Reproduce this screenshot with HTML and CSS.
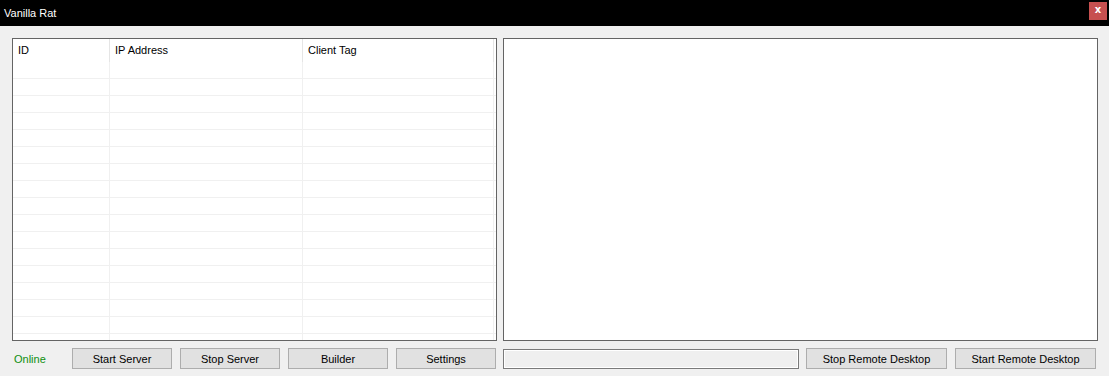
FILE: index.html
```html
<!DOCTYPE html>
<html lang="en">
  <head>
    <meta charset="UTF-8" />
    <meta name="viewport" content="width=device-width, initial-scale=1.0" />
    <title>Vanilla Rat</title>
    <link rel="stylesheet" href="styles.css">
  </head>

  <body>
    <div class="window">
      <header class="titlebar">
        <span class="title">Vanilla Rat</span>
        <button class="close">x</button>
      </header>
      <main class="content">
        <section class="clients">
          <div class="list-head">
            <div class="col col-id">ID</div>
            <div class="col col-ip">IP Address</div>
            <div class="col col-tag">Client Tag</div>
          </div>
          <div class="list-body">
            <div class="row"><div class="cell col-id"></div><div class="cell col-ip"></div><div class="cell col-tag"></div></div>
            <div class="row"><div class="cell col-id"></div><div class="cell col-ip"></div><div class="cell col-tag"></div></div>
            <div class="row"><div class="cell col-id"></div><div class="cell col-ip"></div><div class="cell col-tag"></div></div>
            <div class="row"><div class="cell col-id"></div><div class="cell col-ip"></div><div class="cell col-tag"></div></div>
            <div class="row"><div class="cell col-id"></div><div class="cell col-ip"></div><div class="cell col-tag"></div></div>
            <div class="row"><div class="cell col-id"></div><div class="cell col-ip"></div><div class="cell col-tag"></div></div>
            <div class="row"><div class="cell col-id"></div><div class="cell col-ip"></div><div class="cell col-tag"></div></div>
            <div class="row"><div class="cell col-id"></div><div class="cell col-ip"></div><div class="cell col-tag"></div></div>
            <div class="row"><div class="cell col-id"></div><div class="cell col-ip"></div><div class="cell col-tag"></div></div>
            <div class="row"><div class="cell col-id"></div><div class="cell col-ip"></div><div class="cell col-tag"></div></div>
            <div class="row"><div class="cell col-id"></div><div class="cell col-ip"></div><div class="cell col-tag"></div></div>
            <div class="row"><div class="cell col-id"></div><div class="cell col-ip"></div><div class="cell col-tag"></div></div>
            <div class="row"><div class="cell col-id"></div><div class="cell col-ip"></div><div class="cell col-tag"></div></div>
            <div class="row"><div class="cell col-id"></div><div class="cell col-ip"></div><div class="cell col-tag"></div></div>
            <div class="row"><div class="cell col-id"></div><div class="cell col-ip"></div><div class="cell col-tag"></div></div>
            <div class="row"><div class="cell col-id"></div><div class="cell col-ip"></div><div class="cell col-tag"></div></div>
            <div class="row"><div class="cell col-id"></div><div class="cell col-ip"></div><div class="cell col-tag"></div></div>
          </div>
        </section>
        <section class="desktop"></section>

        <div class="server-bar">
          <span class="status">Online</span>
          <button class="btn">Start Server</button>
          <button class="btn">Stop Server</button>
          <button class="btn">Builder</button>
          <button class="btn">Settings</button>
        </div>
        <div class="remote-bar">
          <div class="progress"></div>
          <button class="btn btn-wide">Stop Remote Desktop</button>
          <button class="btn btn-wide">Start Remote Desktop</button>
        </div>
      </main>
    </div>
  </body>
</html>
```

FILE: styles.css
```css
* {
  box-sizing: border-box;
}
body {
  margin: 0;
  background: #f0f0f0;
  font-family: "Liberation Sans", Arial, sans-serif;
  font-size: 11px;
  color: #000;
}
.window {
  width: 1109px;
  height: 376px;
  display: flex;
  flex-direction: column;
}

.titlebar {
  height: 26px;
  background: #000;
  display: flex;
  align-items: center;
  justify-content: space-between;
  padding: 0 2px 0 4px;
}
.title {
  color: #fff;
  font-size: 11px;
  margin-top: -1px;
}
.close {
  width: 18px;
  height: 18px;
  margin-top: -5px;
  border: 0;
  padding: 0 0 2px;
  background: #c75050;
  color: #fff;
  font-family: "DejaVu Sans", sans-serif;
  font-weight: bold;
  font-size: 10px;
  line-height: 16px;
}

.content {
  display: grid;
  grid-template-columns: 485px 595px;
  grid-template-rows: 303px 21px;
  column-gap: 6px;
  row-gap: 7px;
  padding: 12px 11px 0 12px;
}

/* client list */
.clients {
  border: 1px solid #646464;
  background: #fff;
  overflow: hidden;
}
.list-head {
  display: flex;
  height: 23px;
}
.col {
  padding: 5px 0 0 5px;
  border-right: 1px solid #e5e5e5;
}
.col-id {
  width: 97px;
}
.col-ip {
  width: 193px;
}
.col-tag {
  width: 191px;
}
.row {
  display: flex;
  height: 17px;
  border-bottom: 1px solid #f0f0f0;
}
.cell {
  border-right: 1px solid #f0f0f0;
}

.desktop {
  border: 1px solid #646464;
  background: #fff;
}

/* bottom controls */
.server-bar,
.remote-bar {
  display: flex;
  align-items: center;
}
.status {
  width: 60px;
  padding-left: 2px;
  color: #0f8f0f;
}
.btn {
  width: 100px;
  height: 21px;
  margin-right: 8px;
  padding: 0;
  border: 1px solid #adadad;
  background: #e1e1e1;
  font-family: inherit;
  font-size: 11px;
  color: #000;
}
.btn:last-child {
  margin-right: 0;
}
.btn-wide {
  width: 141px;
}
.progress {
  width: 296px;
  height: 20px;
  margin-right: 7px;
  border: 1px solid #7a7a7a;
  box-shadow: inset 0 0 0 1px #fff;
  background: #efefef;
}
```
